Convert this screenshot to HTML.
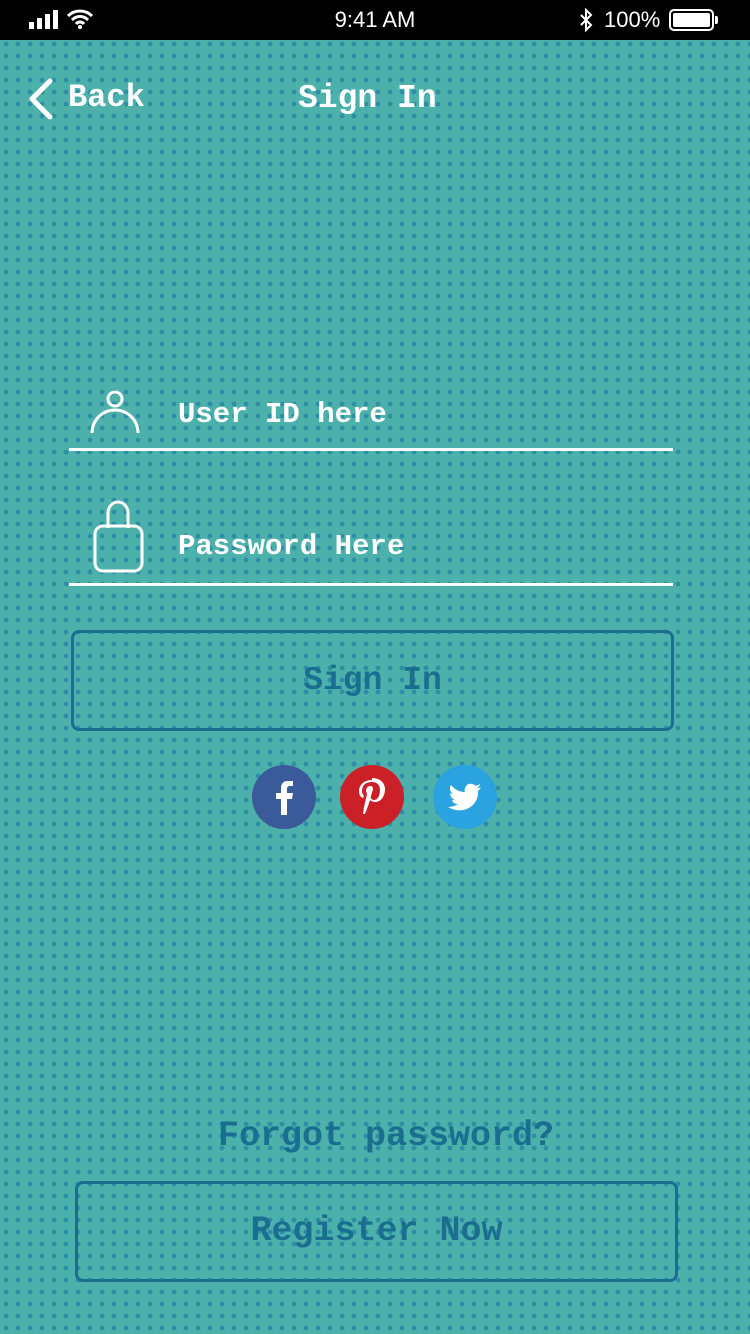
<!DOCTYPE html>
<html><head><meta charset="utf-8"><style>
*{margin:0;padding:0;box-sizing:border-box}
body{width:750px;height:1334px;position:relative;overflow:hidden;font-family:"Liberation Mono",monospace;font-weight:bold;
background-color:#4cb0ab;
background-image:radial-gradient(circle,#2e8ea6 2.2px,transparent 2.6px);
background-size:12px 12px;background-position:0px 2px;}
.sb{position:absolute;top:0;left:0;width:750px;height:40px;background:#000;color:#fff;font-family:"Liberation Sans",sans-serif;font-weight:normal;font-size:22px}
.t{position:absolute;color:#fff;white-space:nowrap}
.line{position:absolute;left:69px;width:604px;height:3px;background:#fff}
.btn{position:absolute;border:3px solid #1a6e8f;border-radius:8px;color:#1a6e8f;text-align:center;font-size:33px}
.c{position:absolute;width:64px;height:64px;border-radius:50%;top:765px}
</style></head><body>
<div class="sb">
<svg style="position:absolute;left:29px;top:10px" width="32" height="20"><rect x="0" y="12" width="5" height="7" fill="#fff"/><rect x="8" y="8" width="5" height="11" fill="#fff"/><rect x="16" y="4" width="5" height="15" fill="#fff"/><rect x="24" y="0" width="5" height="19" fill="#fff"/></svg>
<svg style="position:absolute;left:66px;top:8px" width="28" height="22" viewBox="0 0 28 22"><path d="M2 8a17 17 0 0 1 24 0M6 12a11 11 0 0 1 16 0M10 16a5 5 0 0 1 8 0" stroke="#fff" stroke-width="3" fill="none"/><circle cx="14" cy="19" r="2" fill="#fff"/></svg>
<div style="position:absolute;left:0;width:750px;top:7px;text-align:center">9:41 AM</div>
<svg style="position:absolute;left:578px;top:8px" width="16" height="24"><path d="M3 7l10 10-5 5V2l5 5L3 17" stroke="#fff" stroke-width="2" fill="none"/></svg>
<div style="position:absolute;left:604px;top:7px">100%</div>
<div style="position:absolute;left:669px;top:9px;width:45px;height:22px;border:2px solid #fff;border-radius:5px;padding:2px"><div style="width:100%;height:100%;background:#fff;border-radius:2px"></div></div>
<div style="position:absolute;left:715px;top:16px;width:3px;height:8px;background:#fff;border-radius:0 2px 2px 0"></div>
</div>
<svg style="position:absolute;left:26px;top:77px" width="30" height="44"><path d="M24 4L6 22l18 18" stroke="#fff" stroke-width="5" fill="none" stroke-linecap="round" stroke-linejoin="round"/></svg>
<div class="t" style="left:68px;top:79px;font-size:32px">Back</div>
<div class="t" style="left:298px;top:80px;font-size:33px">Sign In</div>
<svg style="position:absolute;left:88px;top:388px" width="58" height="48"><circle cx="27" cy="11" r="7" stroke="#fff" stroke-width="3" fill="none"/><path d="M4 45a23 23 0 0 1 46 0" stroke="#fff" stroke-width="3" fill="none"/></svg>
<div class="t" style="left:178px;top:398px;font-size:29px">User ID here</div>
<div class="line" style="top:448px"></div>
<svg style="position:absolute;left:92px;top:500px" width="54" height="74"><path d="M16 28V13a10 11 0 0 1 20 0v15" stroke="#fff" stroke-width="3" fill="none"/><rect x="3" y="26" width="47" height="45" rx="8" stroke="#fff" stroke-width="3" fill="none"/></svg>
<div class="t" style="left:178px;top:530px;font-size:29px">Password Here</div>
<div class="line" style="top:583px"></div>
<div class="btn" style="left:71px;top:630px;width:603px;height:101px;line-height:95px">Sign In</div>
<div class="c" style="left:252px;background:#3b5a9a"><svg width="64" height="64"><path d="M35 50V34h5l1-6h-6v-4c0-2 1-3 3-3h3v-5h-5c-5 0-7 3-7 7v5h-5v6h5v16z" fill="#fff"/></svg></div>
<div class="c" style="left:340px;background:#cc2029"><svg width="64" height="64"><path d="M32 15c-9 0-13 6-13 11 0 3 1 6 4 7l1-2c-1-1-2-3-2-5 0-6 4-9 10-9 5 0 8 3 8 8 0 5-2 10-6 10-2 0-4-2-3-4l2-7c0-2-1-3-3-3-2 0-4 2-4 5l1 3-3 13-1 7h2l3-8 2-6c1 1 3 2 5 2 6 0 10-6 10-13 0-6-5-11-13-11z" fill="#fff"/></svg></div>
<div class="c" style="left:433px;background:#2aa3e0"><svg width="64" height="64"><path d="M48 22c-1 1-3 1-4 1 1-1 3-2 3-4-1 1-3 1-4 2-3-3-8-3-10 0-1 2-2 4-1 6-6 0-11-3-14-7-2 3-1 7 2 9-1 0-2 0-3-1 0 3 2 6 5 7h-3c1 3 3 4 6 4-3 2-7 3-10 3 13 8 30 1 30-15v-1c1-1 2-2 3-4z" fill="#fff"/></svg></div>
<div class="t" style="left:218px;top:1116px;font-size:35px;color:#1a6e8f">Forgot password?</div>
<div class="btn" style="left:75px;top:1181px;width:603px;height:101px;line-height:95px;font-size:35px">Register Now</div>
</body></html>
